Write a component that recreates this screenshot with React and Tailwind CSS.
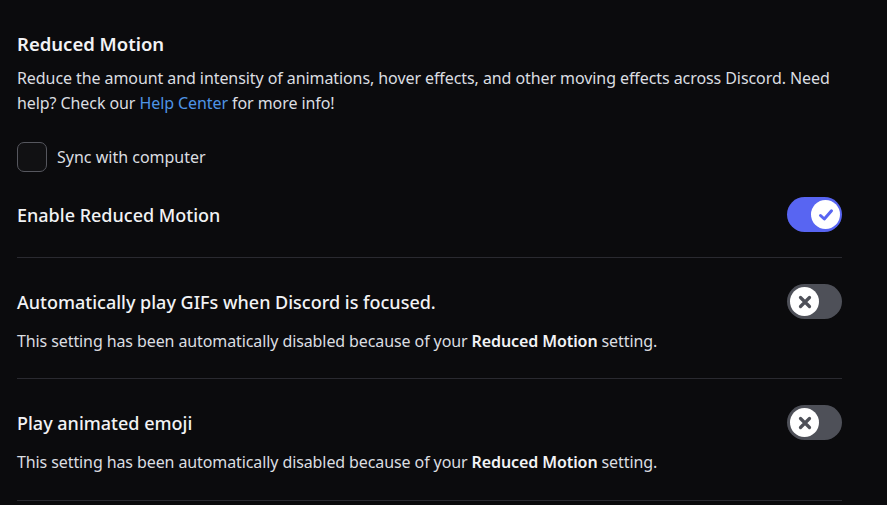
import React from "react";

function Toggle({ on }) {
  if (on) {
    return (
      <div className="flex h-[35px] w-[55px] shrink-0 items-center justify-end rounded-full bg-[#5865f2] pr-[2px]">
        <div className="flex h-[29px] w-[29px] items-center justify-center rounded-full bg-white">
          <svg width="20" height="20" viewBox="0 0 20 20" fill="none">
            <path d="M4.5 10.5 L8.3 14 L15.5 5.8" stroke="#5865f2" strokeWidth="3" strokeLinecap="round" strokeLinejoin="round" />
          </svg>
        </div>
      </div>
    );
  }
  return (
    <div className="flex h-[35px] w-[55px] shrink-0 items-center justify-start rounded-full bg-[#4e5058] pl-[3px]">
      <div className="flex h-[29px] w-[29px] items-center justify-center rounded-full bg-white">
        <svg width="18" height="18" viewBox="0 0 20 20" fill="none">
          <path d="M5 5 L15 15 M15 5 L5 15" stroke="#4e5058" strokeWidth="3.6" strokeLinecap="round" />
        </svg>
      </div>
    </div>
  );
}

function Row({ title, on, desc }) {
  return (
    <div className="flex flex-col">
      <div className="flex items-center justify-between">
        <div className="text-[18px] font-medium leading-[24px] text-[#f2f3f5]">{title}</div>
        <Toggle on={on} />
      </div>
      {desc && (
        <div className="mt-[10px] text-[16px] leading-[24px] tracking-[-0.1px] text-[#dbdee1]">
          This setting has been automatically disabled because of your{" "}
          <span className="font-semibold text-[#f2f3f5]">Reduced Motion</span> setting.
        </div>
      )}
    </div>
  );
}

export default function App() {
  return (
    <div
      className="min-h-[505px] w-full bg-[#0b0b0d] pt-[30px]"
      style={{ fontFamily: '"Noto Sans", "Open Sans", sans-serif' }}
    >
      <div className="ml-[17px] w-[825px]">
        <div className="text-[18.5px] font-semibold leading-[28px] text-[#f2f3f5]">Reduced Motion</div>
        <div className="mt-[8px] text-[16px] leading-[25px] tracking-[-0.08px] text-[#dbdee1]">
          Reduce the amount and intensity of animations, hover effects, and other moving effects across Discord. Need
          help? Check our <span className="text-[#4e94e6]">Help Center</span> for more info!
        </div>
        <div className="mt-[26px] flex items-center gap-[10px]">
          <div className="h-[30px] w-[30px] rounded-[7px] border border-[#56575e] bg-[#111113]" />
          <div className="text-[16px] leading-[24px] text-[#dbdee1]">Sync with computer</div>
        </div>
        <div className="mt-[25px]">
          <Row title="Enable Reduced Motion" on />
        </div>
        <div className="mt-[25px] h-px bg-[#2a2a30]" />
        <div className="mt-[26px]">
          <Row title="Automatically play GIFs when Discord is focused." desc />
        </div>
        <div className="mt-[25px] h-px bg-[#2a2a30]" />
        <div className="mt-[26px]">
          <Row title="Play animated emoji" desc />
        </div>
        <div className="mt-[26px] h-px bg-[#2a2a30]" />
      </div>
    </div>
  );
}
